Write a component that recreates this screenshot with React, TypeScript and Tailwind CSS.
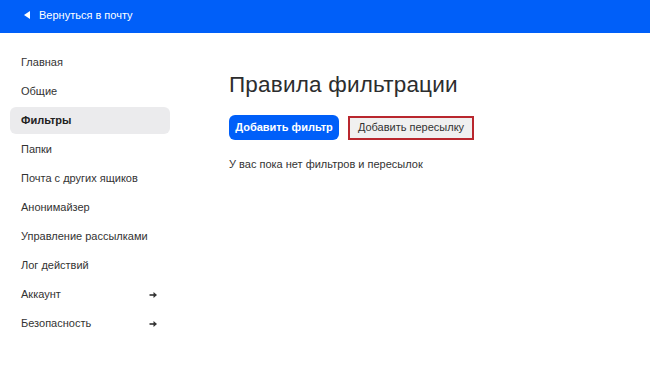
const items = [
  { label: "Главная" },
  { label: "Общие" },
  { label: "Фильтры", active: true },
  { label: "Папки" },
  { label: "Почта с других ящиков" },
  { label: "Анонимайзер" },
  { label: "Управление рассылками" },
  { label: "Лог действий" },
  { label: "Аккаунт", arrow: true },
  { label: "Безопасность", arrow: true },
]

function Arrow() {
  return (
    <svg width="9" height="8" viewBox="0 0 9 8" className="text-[#333]">
      <path d="M0.5 4H6.5" stroke="currentColor" strokeWidth="1.6" />
      <path d="M4.5 1L8 4L4.5 7Z" fill="currentColor" />
    </svg>
  )
}

export default function App() {
  return (
    <div className="w-[650px] h-[374px] bg-white font-['Liberation_Sans',Arial,sans-serif] overflow-hidden">
      <div className="h-[33px] bg-[#005ff9] flex items-center pl-[24px] pb-[3px] gap-[9px] text-white text-[11px]">
        <svg width="6" height="8" viewBox="0 0 6 8">
          <path d="M6 0L0 4L6 8Z" fill="white" />
        </svg>
        <span>Вернуться в почту</span>
      </div>
      <div className="flex">
        <nav className="w-[160px] shrink-0 ml-[10px] pt-[16px] flex flex-col gap-[2px]">
          {items.map((it) => (
            <div
              key={it.label}
              className={
                "h-[27px] flex items-center justify-between pl-[11px] pr-[12px] rounded-[6px] text-[11px] " +
                (it.active ? "bg-[#ebebed] font-bold text-[#222]" : "text-[#333]")
              }
            >
              <span>{it.label}</span>
              {it.arrow && <Arrow />}
            </div>
          ))}
        </nav>
        <main className="ml-[59px] pt-[38px]">
          <h1 className="text-[22.5px] leading-[28px] text-[#2c2d2e] tracking-[0.2px]">Правила фильтрации</h1>
          <div className="flex items-center gap-[9px] mt-[16px]">
            <button className="h-[25px] w-[110px] rounded-[6px] bg-[#005ff9] text-white text-[11px] font-bold">
              Добавить фильтр
            </button>
            <button className="h-[24px] w-[126px] bg-[#f0f0f0] border-2 border-[#b9272e] text-[#333] text-[11px]">
              Добавить пересылку
            </button>
          </div>
          <p className="mt-[16px] text-[11px] text-[#333]">У вас пока нет фильтров и пересылок</p>
        </main>
      </div>
    </div>
  )
}
